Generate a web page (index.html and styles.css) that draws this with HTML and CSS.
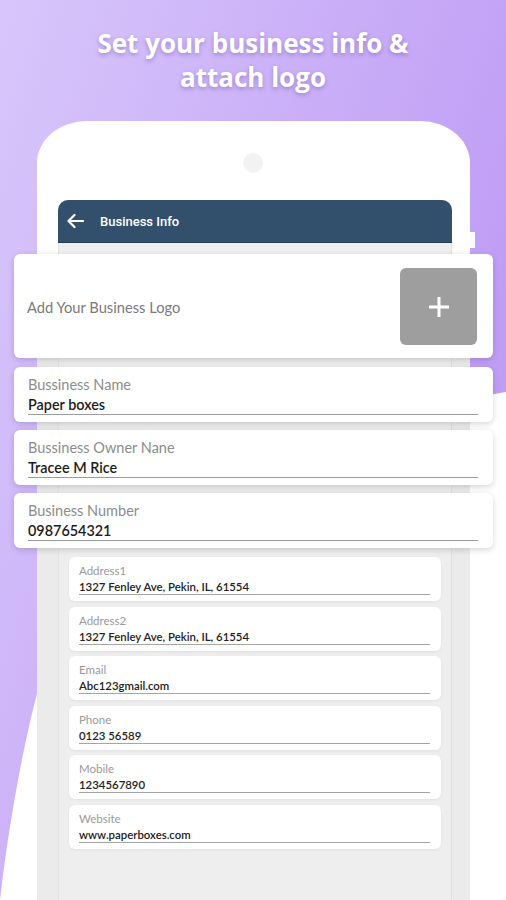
FILE: index.html
```html
<!DOCTYPE html>
<html lang="en">
<head>
    <meta charset="UTF-8">
    <meta name="viewport" content="width=device-width, initial-scale=1.0">
    <title>Business Info</title>
    <link rel="stylesheet" href="styles.css">
</head>
<body>
    <svg class="backdrop" width="506" height="900" viewBox="0 0 506 900">
        <defs>
            <linearGradient id="purple" x1="0" y1="0" x2="0.9" y2="0.5">
                <stop offset="0" stop-color="#d8c6fb"/>
                <stop offset="1" stop-color="#bf9df5"/>
            </linearGradient>
        </defs>
        <path d="M0 0 H506 V392 C330 420 90 520 38 690 C22 750 8 830 0 900 Z" fill="url(#purple)"/>
    </svg>

    <div class="page">
        <h1 class="headline">Set your business info &amp;<br>attach logo</h1>

        <div class="phone">
            <div class="camera"></div>

            <div class="screen">
                <div class="app-bar">
                    <svg class="back-icon" width="18" height="16" viewBox="0 0 18 16">
                        <path d="M17 8 H2.5 M8.5 2 L2.5 8 L8.5 14" fill="none" stroke="#fff" stroke-width="2.2" stroke-linecap="round" stroke-linejoin="round"/>
                    </svg>
                    <span class="app-title">Business Info</span>
                </div>

                <div class="big-card logo-card">
                    <span class="logo-text">Add Your Business Logo</span>
                    <div class="logo-box">
                        <svg width="22" height="22" viewBox="0 0 22 22">
                            <path d="M11 1 V21 M1 11 H21" stroke="#fff" stroke-width="3"/>
                        </svg>
                    </div>
                </div>

                <div class="big-card field">
                    <div class="field-label">Bussiness Name</div>
                    <div class="field-value">Paper boxes</div>
                </div>
                <div class="big-card field">
                    <div class="field-label">Bussiness Owner Nane</div>
                    <div class="field-value">Tracee M Rice</div>
                </div>
                <div class="big-card field">
                    <div class="field-label">Business Number</div>
                    <div class="field-value">0987654321</div>
                </div>

                <div class="small-list">
                    <div class="small-card">
                        <div class="small-label">Address1</div>
                        <div class="small-value">1327 Fenley Ave, Pekin, IL, 61554</div>
                    </div>
                    <div class="small-card">
                        <div class="small-label">Address2</div>
                        <div class="small-value">1327 Fenley Ave, Pekin, IL, 61554</div>
                    </div>
                    <div class="small-card">
                        <div class="small-label">Email</div>
                        <div class="small-value">Abc123gmail.com</div>
                    </div>
                    <div class="small-card">
                        <div class="small-label">Phone</div>
                        <div class="small-value">0123 56589</div>
                    </div>
                    <div class="small-card">
                        <div class="small-label">Mobile</div>
                        <div class="small-value">1234567890</div>
                    </div>
                    <div class="small-card">
                        <div class="small-label">Website</div>
                        <div class="small-value">www.paperboxes.com</div>
                    </div>
                </div>
            </div>
        </div>
    </div>
</body>
</html>
```

FILE: styles.css
```css
body {
    margin: 0;
    width: 506px;
    height: 900px;
    overflow: hidden;
    position: relative;
    background-color: #fff;
    font-family: Lato, 'Noto Sans', sans-serif;
}

.backdrop {
    position: absolute;
    top: 0;
    left: 0;
}

.page {
    position: relative;
    padding-top: 26px;
}

.headline {
    margin: 0;
    text-align: center;
    font-family: 'Open Sans', sans-serif;
    font-weight: 700;
    font-size: 26px;
    line-height: 34px;
    color: #fff;
    text-shadow: 0 2px 4px rgba(80, 50, 130, 0.35);
}

.phone {
    position: relative;
    width: 433px;
    height: 779px;
    margin: 27px 0 0 37px;
    box-sizing: border-box;
    padding-top: 79px;
    border-radius: 50px 50px 0 0 / 42px 42px 0 0;
    background: linear-gradient(#fff 0, #fff 120px, #ebebeb 240px);
}

/* side button */
.phone::after {
    content: '';
    position: absolute;
    right: -5px;
    top: 111px;
    width: 5px;
    height: 16px;
    background-color: #fafafa;
}

.camera {
    position: absolute;
    top: 32px;
    left: 206px;
    width: 20px;
    height: 20px;
    border-radius: 50%;
    background-color: #f2f2f2;
}

.screen {
    margin: 0 18px 0 21px;
    height: 700px;
    background-color: #eeeeee;
    border-left: 1px solid #e3e3e3;
    border-right: 1px solid #e0e0e0;
    border-radius: 10px 10px 0 0;
    padding-bottom: 12px;
}

.app-bar {
    height: 42px;
    display: flex;
    align-items: center;
    padding-left: 8px;
    background-color: #32506c;
    border-bottom: 1px solid #223d58;
    border-radius: 10px 10px 0 0;
    margin: 0 -1px 11px;
}

.back-icon {
    margin-right: 16px;
}

.app-title {
    font-family: Roboto, sans-serif;
    font-weight: 500;
    font-size: 13px;
    color: #fff;
}

.big-card {
    margin: 0 -42px 8px -45px;
    background-color: #fff;
    border-radius: 6px;
    box-shadow: 0 2px 6px rgba(0, 0, 0, 0.16);
}

.logo-card {
    display: flex;
    align-items: center;
    justify-content: space-between;
    padding: 14px 16px 13px 13px;
    margin-bottom: 9px;
}

.logo-text {
    font-size: 14.7px;
    color: #7a7a7a;
}

.logo-box {
    width: 77px;
    height: 77px;
    border-radius: 6px;
    background-color: #9e9e9e;
    display: flex;
    align-items: center;
    justify-content: center;
}

.field {
    padding: 9px 15px 7px 14px;
}

.field-label {
    font-size: 14.5px;
    line-height: 17px;
    color: #8c8c8c;
}

.field-value {
    font-size: 14.4px;
    font-weight: 600;
    line-height: 18px;
    padding-top: 3px;
    color: #1c1c1c;
    border-bottom: 1px solid #9c9c9c;
}

.small-list {
    display: flex;
    flex-direction: column;
    gap: 5.6px;
    margin: 9px 10px 0;
}

.small-card {
    background-color: #fff;
    border-radius: 6px;
    padding: 7px 11px 6px 10px;
    box-shadow: 0 1px 3px rgba(0, 0, 0, 0.06);
}

.small-label {
    font-size: 11.5px;
    line-height: 14px;
    color: #9a9a9a;
}

.small-value {
    font-size: 11.4px;
    font-weight: 600;
    line-height: 14px;
    padding-top: 2px;
    color: #222;
    border-bottom: 1px solid #a5a5a5;
}
```
